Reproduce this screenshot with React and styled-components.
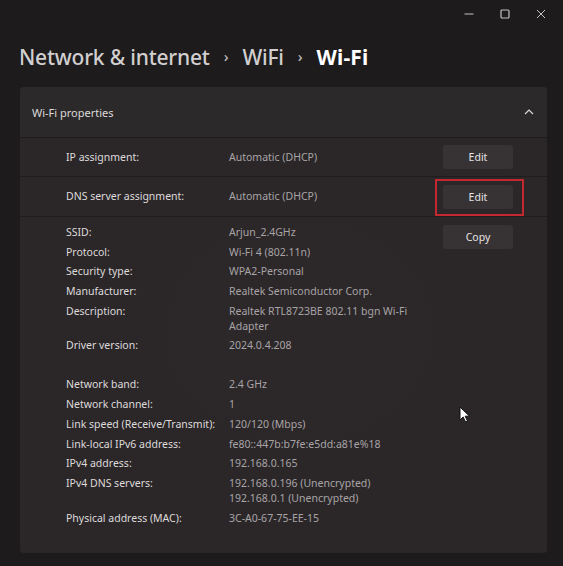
import React from "react";
import styled, { createGlobalStyle } from "styled-components";

const GlobalStyle = createGlobalStyle`
  html, body {
    margin: 0;
    padding: 0;
    background: #1c1a1b;
  }
  * { box-sizing: border-box; }
`;

const Window = styled.div`
  position: relative;
  width: 563px;
  height: 566px;
  overflow: hidden;
  font-family: "Segoe UI", "Noto Sans", sans-serif;
  background:
    radial-gradient(ellipse 260px 220px at 300px 330px, rgba(70, 30, 32, 0.35), transparent),
    #1d1b1c;
  color: #dedada;
`;

const TitleBar = styled.div`
  height: 28px;
  display: flex;
  justify-content: flex-end;
  align-items: center;
  padding-right: 4px;
`;

const WinButton = styled.div`
  width: 36px;
  height: 20px;
  display: flex;
  align-items: center;
  justify-content: center;
  color: #c4c2c3;
`;

const Breadcrumb = styled.h1`
  margin: 0;
  padding: 0 0 2px 19px;
  height: 59px;
  display: flex;
  align-items: center;
  gap: 11px;
  font-size: 21px;
  font-weight: 500;
  color: #d2cfd0;
  letter-spacing: -0.2px;
`;

const Crumb = styled.span`
  color: ${(p) => (p.current ? "#ffffff" : "#d2cfd0")};
  font-weight: ${(p) => (p.current ? 700 : 500)};
  letter-spacing: ${(p) => (p.current ? "0.2px" : "-0.2px")};
`;

const Sep = styled.span`
  font-size: 15px;
  color: #bdbabb;
  margin: 0 3px;
  transform: translateY(-1px);
`;

const Card = styled.section`
  margin: 0 16px 0 20px;
  background-color: rgba(44, 40, 42, 0.92);
  border-radius: 4px;
  height: 466px;
`;

const Header = styled.div`
  height: 51px;
  display: flex;
  align-items: center;
  justify-content: space-between;
  padding: 0 13px 0 12px;
  font-size: 11px;
  color: #dcd9da;
  border-bottom: 1px solid #1f1c1e;
  background: #2c292b;
  border-radius: 4px 4px 0 0;
`;

const Row = styled.div`
  display: grid;
  grid-template-columns: 163px 1fr 70px;
  align-items: center;
  height: ${(p) => p.h}px;
  padding: 0 34px 0 46px;
  border-bottom: 1px solid #1f1c1e;
  font-size: 10.5px;
`;

const Label = styled.div`
  color: #dedada;
  line-height: 15px;
`;

const Value = styled.div`
  color: #a8a4a6;
  line-height: 15px;
`;

const Button = styled.button`
  width: 70px;
  height: 24px;
  border: none;
  border-radius: 3px;
  background: #373335;
  color: #e6e3e4;
  font-family: inherit;
  font-size: 10.5px;
  padding: 0;
`;

const Highlight = styled.div`
  position: relative;
  width: 70px;
  height: 24px;
  &::after {
    content: "";
    position: absolute;
    left: -8px;
    right: -11px;
    top: -6px;
    bottom: -7px;
    border: 2px solid #c3272f;
  }
`;

const Details = styled.div`
  display: grid;
  grid-template-columns: 163px 1fr 70px;
  padding: 8px 34px 0 46px;
  font-size: 10.5px;
`;

const ItemList = styled.div`
  grid-column: 1 / 3;
  display: flex;
  flex-direction: column;
  gap: 24px;
`;

const Group = styled.div`
  display: grid;
  grid-template-columns: 163px 1fr;
  row-gap: 4.7px;
`;

const Cursor = styled.svg`
  position: absolute;
  left: 459px;
  top: 406px;
`;

const groupA = [
  ["SSID:", "Arjun_2.4GHz"],
  ["Protocol:", "Wi-Fi 4 (802.11n)"],
  ["Security type:", "WPA2-Personal"],
  ["Manufacturer:", "Realtek Semiconductor Corp."],
  ["Description:", ["Realtek RTL8723BE 802.11 bgn Wi-Fi", "Adapter"]],
  ["Driver version:", "2024.0.4.208"],
];

const groupB = [
  ["Network band:", "2.4 GHz"],
  ["Network channel:", "1"],
  ["Link speed (Receive/Transmit):", "120/120 (Mbps)"],
  ["Link-local IPv6 address:", "fe80::447b:b7fe:e5dd:a81e%18"],
  ["IPv4 address:", "192.168.0.165"],
  ["IPv4 DNS servers:", ["192.168.0.196 (Unencrypted)", "192.168.0.1 (Unencrypted)"]],
  ["Physical address (MAC):", "3C-A0-67-75-EE-15"],
];

function Items({ items }) {
  return (
    <Group>
      {items.map(([k, v]) => (
        <React.Fragment key={k}>
          <Label>{k}</Label>
          <Value>
            {Array.isArray(v)
              ? v.map((line) => <div key={line}>{line}</div>)
              : v}
          </Value>
        </React.Fragment>
      ))}
    </Group>
  );
}

export default function App() {
  return (
    <>
      <GlobalStyle />
      <Window>
        <TitleBar>
          <WinButton>
            <svg width="10" height="10" viewBox="0 0 10 10">
              <path d="M0.5 5h9" stroke="currentColor" strokeWidth="1" />
            </svg>
          </WinButton>
          <WinButton>
            <svg width="10" height="10" viewBox="0 0 10 10">
              <rect x="1" y="1" width="8" height="8" rx="1" fill="none" stroke="currentColor" strokeWidth="1.2" />
            </svg>
          </WinButton>
          <WinButton>
            <svg width="10" height="10" viewBox="0 0 10 10">
              <path d="M1 1l8 8M9 1l-8 8" stroke="currentColor" strokeWidth="1" />
            </svg>
          </WinButton>
        </TitleBar>

        <Breadcrumb>
          <Crumb>Network &amp; internet</Crumb>
          <Sep>›</Sep>
          <Crumb>WiFi</Crumb>
          <Sep>›</Sep>
          <Crumb current>Wi-Fi</Crumb>
        </Breadcrumb>

        <Card>
          <Header>
            <span>Wi-Fi properties</span>
            <svg width="10" height="6" viewBox="0 0 10 6">
              <path d="M1 5l4-4 4 4" fill="none" stroke="#dcd9da" strokeWidth="1.2" />
            </svg>
          </Header>

          <Row h={39}>
            <Label>IP assignment:</Label>
            <Value>Automatic (DHCP)</Value>
            <Button>Edit</Button>
          </Row>

          <Row h={40}>
            <Label>DNS server assignment:</Label>
            <Value>Automatic (DHCP)</Value>
            <Highlight>
              <Button>Edit</Button>
            </Highlight>
          </Row>

          <Details>
            <ItemList>
              <Items items={groupA} />
              <Items items={groupB} />
            </ItemList>
            <div>
              <Button>Copy</Button>
            </div>
          </Details>
        </Card>

        <Cursor width="12" height="17" viewBox="0 0 12 17">
          <path d="M1 1v13l3.2-3 2.3 5 2-.9-2.3-4.9H10.5z" fill="#ffffff" stroke="#111" strokeWidth="1" />
        </Cursor>
      </Window>
    </>
  );
}
